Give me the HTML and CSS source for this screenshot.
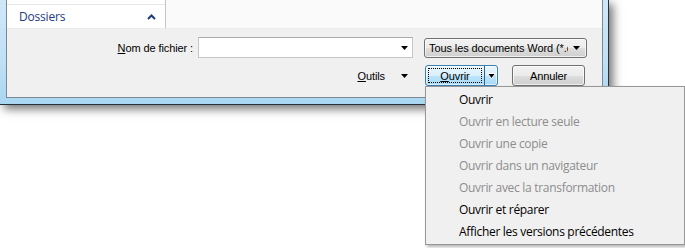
FILE: index.html
```html
<!DOCTYPE html>
<html lang="fr">
<head>
    <meta charset="UTF-8">
    <title>Ouvrir</title>
    <link rel="stylesheet" href="styles.css">
</head>
<body>
    <div class="window">
        <div class="client">
            <div class="top">
                <div class="nav">
                    <div class="nav-sep"></div>
                    <div class="nav-item">
                        <span>Dossiers</span>
                        <svg class="chevron" width="9" height="6" viewBox="0 0 9 6">
                            <path d="M1 5 L4.5 1.5 L8 5" fill="none" stroke="#1e3b73" stroke-width="2"/>
                        </svg>
                    </div>
                </div>
                <div class="top-rest"></div>
            </div>

            <div class="form">
                <div class="row row-file">
                    <span class="label"><u>N</u>om de fichier :</span>
                    <div class="combo">
                        <svg class="arrow" width="7" height="4" viewBox="0 0 7 4"><path d="M0 0 H7 L3.5 4 Z" fill="#000"/></svg>
                    </div>
                    <div class="select">
                        <span class="select-text">Tous les documents Word (*.doc;*.docx)</span>
                        <svg class="arrow" width="7" height="4" viewBox="0 0 7 4"><path d="M0 0 H7 L3.5 4 Z" fill="#000"/></svg>
                    </div>
                </div>

                <div class="row row-actions">
                    <span class="tools"><u>O</u>utils</span>
                    <svg class="tools-arrow" width="7" height="4" viewBox="0 0 7 4"><path d="M0 0 H7 L3.5 4 Z" fill="#000"/></svg>

                    <div class="split">
                        <div class="split-main"><span class="focus"><u>O</u>uvrir</span></div>
                        <div class="split-arrow">
                            <svg width="9" height="6" viewBox="0 0 9 6"><path d="M0.5 0.5 H8.5 L4.5 5.5 Z" fill="#000" stroke="#fff" stroke-width="1"/></svg>
                        </div>

                        <ul class="menu">
                            <li>Ouvrir</li>
                            <li class="off">Ouvrir en lecture seule</li>
                            <li class="off">Ouvrir une copie</li>
                            <li class="off">Ouvrir dans un navigateur</li>
                            <li class="off">Ouvrir avec la transformation</li>
                            <li>Ouvrir et réparer</li>
                            <li>Afficher les versions précédentes</li>
                        </ul>
                    </div>

                    <button class="btn">Annuler</button>
                </div>
            </div>
        </div>
    </div>
</body>
</html>
```

FILE: styles.css
```css
html, body {
    margin: 0;
    height: 100%;
    overflow: hidden;
    background: #fff;
}

body {
    font-family: "Liberation Sans", Arial, sans-serif;
    font-size: 11px;
    letter-spacing: -0.1px;
    color: #000;
}

/* fenêtre + cadre aero */
.window {
    width: 597px;
    padding: 0 5px 6px 6px;
    background: linear-gradient(to bottom, #cfe8f8 0%, #bfe0f5 60%, #a9d6f1 100%);
    border-right: 1px solid #26313b;
    border-bottom: 1px solid #26313b;
    box-shadow: 4px 4px 9px rgba(0, 0, 0, 0.55);
}

.client {
    border: 1px solid #7b8896;
    border-top: none;
    background: #f0f0f0;
}

.top {
    height: 28px;
    display: flex;
    background: #fafafa;
    border-bottom: 1px solid #eaeaea;
}

.nav {
    width: 158px;
    background: #fff;
    border-right: 1px solid #c3c3c3;
}

.nav-sep {
    height: 4px;
    border-bottom: 1px solid #e6e6e6;
}

.nav-item {
    height: 23px;
    display: flex;
    align-items: center;
    justify-content: space-between;
    padding: 0 9px 0 12px;
    font-family: "Open Sans", sans-serif;
    font-size: 12px;
    letter-spacing: -0.2px;
    color: #1e3b80;
}

.top-rest {
    flex: 1;
}

/* zone formulaire */
.form {
    padding: 8px 0 11px;
    display: flex;
    flex-direction: column;
    gap: 7px;
}

.row {
    height: 21px;
    display: flex;
    align-items: center;
    justify-content: flex-end;
}

.row-file {
    padding-right: 15px;
}

.row-actions {
    padding-right: 17px;
}

.label {
    margin-right: 5px;
}

.combo {
    width: 215px;
    height: 21px;
    box-sizing: border-box;
    border: 1px solid #c4c6cc;
    border-top-color: #abadb3;
    background: #fff;
    display: flex;
    align-items: center;
    justify-content: flex-end;
}

.combo .arrow {
    margin-right: 4px;
}

.select {
    width: 163px;
    height: 20px;
    box-sizing: border-box;
    margin-left: 11px;
    padding: 0 6px 0 4px;
    border: 1px solid #707070;
    border-radius: 3px;
    background: linear-gradient(to bottom, #f2f2f2 0%, #ebebeb 50%, #dddddd 51%, #cfcfcf 100%);
    display: flex;
    align-items: center;
    justify-content: space-between;
    box-shadow: inset 0 0 0 1px rgba(255, 255, 255, 0.7);
}

.select-text {
    width: 139px;
    overflow: hidden;
    white-space: nowrap;
}

.tools {
    margin-right: 16px;
}

.tools-arrow {
    margin-right: 17px;
}

/* bouton partagé */
.split {
    position: relative;
    width: 73px;
    height: 21px;
    box-sizing: border-box;
    display: flex;
    border: 1px solid #3c7fb1;
    border-radius: 3px;
    background: linear-gradient(to bottom, #eaf6fd 0%, #d9f0fc 50%, #bee6fd 51%, #a7d9f5 100%);
    box-shadow: inset 0 0 0 1px rgba(255, 255, 255, 0.6);
}

.split-main {
    flex: 1;
    padding: 2px;
    display: flex;
    border-right: 1px solid #2c628b;
}

.focus {
    flex: 1;
    display: flex;
    align-items: center;
    justify-content: center;
    border: 1px dotted #000;
}

.split-arrow {
    width: 12px;
    display: flex;
    align-items: center;
    justify-content: center;
}

.btn {
    width: 73px;
    height: 21px;
    margin-left: 14px;
    padding: 0;
    font: inherit;
    letter-spacing: inherit;
    color: #000;
    border: 1px solid #707070;
    border-radius: 3px;
    background: linear-gradient(to bottom, #f2f2f2 0%, #ebebeb 50%, #dddddd 51%, #cfcfcf 100%);
    box-shadow: inset 0 0 0 1px rgba(255, 255, 255, 0.7);
}

/* menu déroulant */
.menu {
    position: absolute;
    top: 20px;
    left: -1px;
    width: 258px;
    margin: 0;
    padding: 2px 0 1px;
    list-style: none;
    background: #f0f0f0;
    border: 1px solid #979797;
    box-shadow: 2px 2px 3px rgba(0, 0, 0, 0.3);
    font-family: "Open Sans", sans-serif;
    font-size: 12px;
    letter-spacing: -0.3px;
    z-index: 10;
}

.menu li {
    height: 22px;
    line-height: 22px;
    padding-left: 33px;
    white-space: nowrap;
}

.menu li.off {
    color: #8d8d8d;
}
```
